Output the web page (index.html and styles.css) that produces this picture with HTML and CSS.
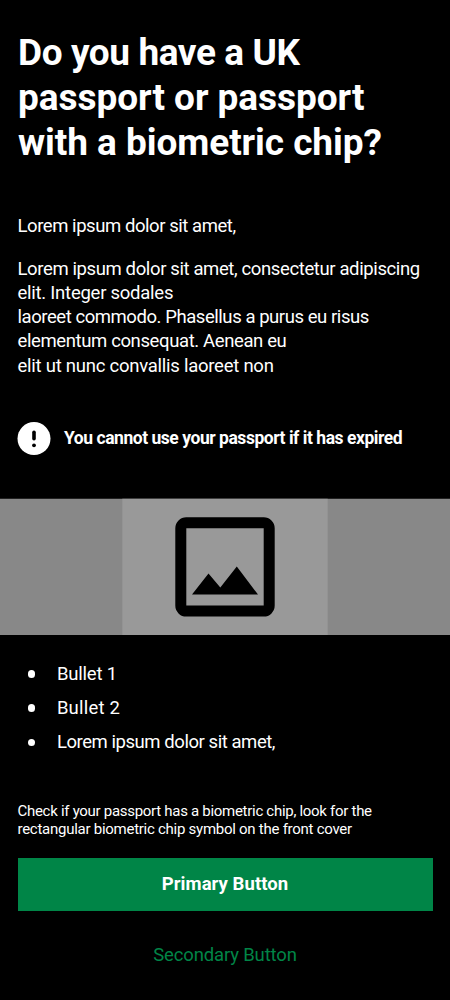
FILE: index.html
```html
<!DOCTYPE html>
<html lang="en">
<head>
<meta charset="utf-8">
<title>Passport check</title>
<link rel="stylesheet" href="styles.css">
</head>
<body>
<main class="screen">
  <h1 class="title"><span class="t1">Do you have a UK</span><br><span class="t2">passport or passport</span><br><span class="t3">with a biometric chip?</span></h1>
  <p class="body intro"><span class="b1">Lorem ipsum dolor sit amet,</span></p>
  <p class="body"><span class="b2">Lorem ipsum dolor sit amet, consectetur adipiscing</span><br><span class="b3">elit. Integer sodales</span><br><span class="b1">laoreet commodo. Phasellus a purus eu risus</span><br><span class="b4">elementum consequat. Aenean eu</span><br><span class="b3">elit ut nunc convallis laoreet non</span></p>
  <div class="notice">
    <svg class="notice-icon" viewBox="0 0 34 34"><circle cx="17" cy="16.600" r="16.500" fill="#fff"/><path d="M17 10.200v6.600" stroke="#000" stroke-width="3.600" stroke-linecap="round"/><circle cx="17" cy="23.300" r="1.900"/></svg>
    <strong class="notice-text">You cannot use your passport if it has expired</strong>
  </div>
  <svg class="picture" viewBox="0 0 450 137">
    <path fill="#888" d="M0 .7h450v136.300H0z"/>
    <path fill="#999" d="M122.300 .7h205.400v136.300H122.300z"/>
    <path fill-rule="evenodd" d="M186.300 19.300h77.400a11 11 0 0 1 11 11v77.300a11 11 0 0 1-11 11h-77.400a11 11 0 0 1-11-11V30.300a11 11 0 0 1 11-11zM186.300 30.300v77.300h77.400V30.300z"/>
    <path d="M192 96.600l16.500-21.100 11.800 14.100 16.500-21.100 21.200 28.100z"/>
  </svg>
  <ul class="list">
    <li class="item"><span class="dot"></span><span class="b5">Bullet 1</span></li>
    <li class="item"><span class="dot"></span><span class="b6">Bullet 2</span></li>
    <li class="item"><span class="dot"></span><span class="b1">Lorem ipsum dolor sit amet,</span></li>
  </ul>
  <p class="hint"><span class="h1">Check if your passport has a biometric chip, look for the</span><br><span class="h2">rectangular biometric chip symbol on the front cover</span></p>
  <button class="button primary">Primary Button</button>
  <button class="button secondary">Secondary Button</button>
</main>
</body>
</html>
```
FILE: styles.css
```css
* { box-sizing: border-box; }
body { margin: 0; background: #000; color: #fff; font-family: Roboto, sans-serif; }
.screen { display: flex; flex-direction: column; width: 450px; height: 1000px; padding-top: 30px; overflow: hidden; }
.title { margin: 0 18px; font-size: 37px; line-height: 45px; font-weight: 700; white-space: nowrap; }
.t1 { letter-spacing: -.41px; }
.t2 { letter-spacing: -.047px; }
.t3 { letter-spacing: -.065px; }
.body { margin: 0 17.5px; font-size: 18.5px; line-height: 24.2px; white-space: nowrap; }
.body + .body { margin-top: 18.8px; }
.intro { margin-top: 48.8px; }
.b1 { letter-spacing: -.44px; }
.b2 { letter-spacing: -.38px; }
.b3 { letter-spacing: -.25px; }
.b4 { letter-spacing: -.38px; }
.b5 { letter-spacing: -.2px; }
.b6 { letter-spacing: .2px; }
.notice { display: flex; align-items: center; gap: 13px; margin: 43.7px 17px 0; height: 34px; }
.notice-icon { width: 34px; height: 34px; flex: none; }
.notice-text { font-size: 17.5px; line-height: 24px; letter-spacing: -.46px; white-space: nowrap; padding-bottom: 2px; }
.picture { display: block; width: 450px; height: 137px; margin-top: 42.5px; flex: none; }
.list { list-style: none; margin: 26.8px 0 0; padding: 0 28px; display: flex; flex-direction: column; gap: 10px; font-size: 18.5px; line-height: 24.2px; }
.item { display: flex; align-items: center; gap: 21.5px; white-space: nowrap; }
.dot { width: 7.4px; height: 7.4px; border-radius: 50%; background: #fff; }
.hint { margin: 49px 17.5px 0; font-size: 15px; line-height: 17.6px; white-space: nowrap; }
.h1 { letter-spacing: -.29px; }
.h2 { letter-spacing: -.265px; }
.button { display: block; width: 415px; height: 53.5px; margin: 19.3px 0 0 17.5px; padding: 0; border: 0; background: none; font: 400 18.5px/24px Roboto, sans-serif; flex: none; }
.primary { background: #008547; color: #fff; font-weight: 700; letter-spacing: .057px; padding-bottom: 2px; }
.secondary { color: #008547; letter-spacing: -.148px; margin-top: 16.5px; }
```
